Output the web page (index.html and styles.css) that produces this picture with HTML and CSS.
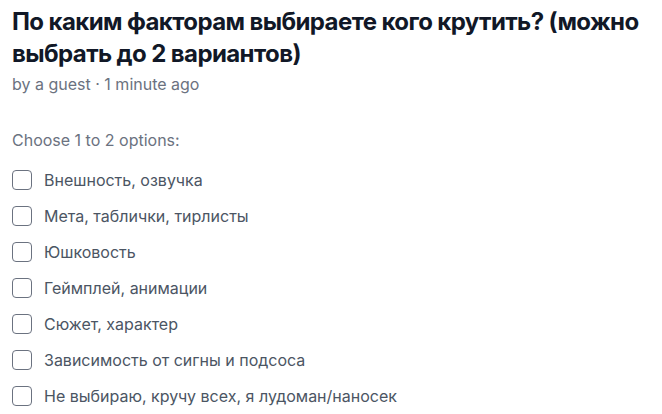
FILE: index.html
```html
<!DOCTYPE html>
<html lang="ru">
<head>
<meta charset="utf-8">
<link rel="stylesheet" href="styles.css">
</head>
<body>
<main class="poll">
  <h1 class="poll-title">По каким факторам выбираете кого крутить? (можно выбрать до 2 вариантов)</h1>
  <p class="poll-meta">by a guest · 1 minute ago</p>
  <p class="poll-hint">Choose 1 to 2 options:</p>
  <ul class="options">
    <li class="option"><span class="box"></span><span class="label">Внешность, озвучка</span></li>
    <li class="option"><span class="box"></span><span class="label">Мета, таблички, тирлисты</span></li>
    <li class="option"><span class="box"></span><span class="label">Юшковость</span></li>
    <li class="option"><span class="box"></span><span class="label">Геймплей, анимации</span></li>
    <li class="option"><span class="box"></span><span class="label">Сюжет, характер</span></li>
    <li class="option"><span class="box"></span><span class="label">Зависимость от сигны и подсоса</span></li>
    <li class="option"><span class="box"></span><span class="label">Не выбираю, кручу всех, я лудоман/наносек</span></li>
  </ul>
</main>
</body>
</html>
```

FILE: styles.css
```css
html, body {
  margin: 0;
  padding: 0;
  background: #ffffff;
}
body {
  font-family: Inter, "Noto Sans", sans-serif;
  color: #111827;
}
.poll {
  padding: 6px 12px 0 12px;
}
.poll-title {
  margin: 0;
  font-size: 24px;
  line-height: 32px;
  font-weight: 700;
  letter-spacing: -0.025em;
  color: #111827;
}
.poll-meta {
  margin: 2px 0 0 0;
  font-size: 16px;
  line-height: 24px;
  color: #6b7280;
}
.poll-hint {
  margin: 32px 0 0 0;
  font-size: 16px;
  line-height: 24px;
  color: #6b7280;
}
.options {
  list-style: none;
  margin: 16px 0 0 0;
  padding: 0;
  display: flex;
  flex-direction: column;
  gap: 12px;
}
.option {
  display: flex;
  align-items: center;
  gap: 12px;
  height: 24px;
}
.box {
  box-sizing: border-box;
  width: 20px;
  height: 20px;
  border: 1.5px solid #6b7280;
  border-radius: 4px;
  flex: none;
}
.label {
  font-size: 16px;
  line-height: 24px;
  color: #4b5563;
}
```
